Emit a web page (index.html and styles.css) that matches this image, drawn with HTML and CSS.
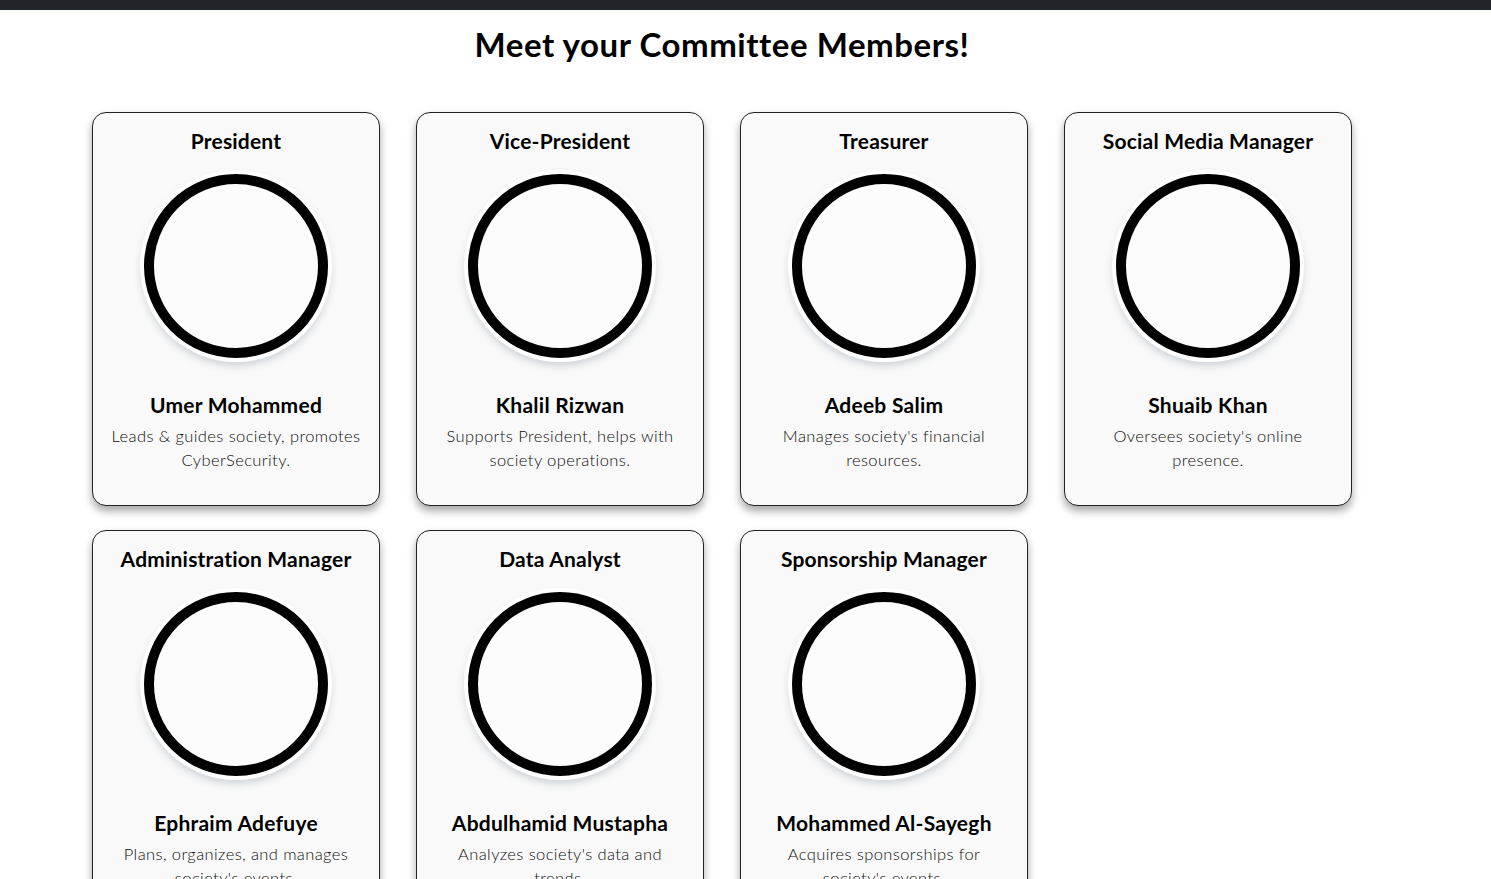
FILE: index.html
```html
<!DOCTYPE html>
<html lang="en">
<head>
<meta charset="utf-8">
<title>Committee</title>
<link rel="stylesheet" href="styles.css">
</head>
<body>
<div class="topbar"></div>
<main class="page">
  <h1 class="title">Meet your Committee Members!</h1>
  <section class="grid">
    <article class="card">
      <h3 class="role">President</h3>
      <div class="avatar"></div>
      <h4 class="name">Umer Mohammed</h4>
      <p class="desc">Leads &amp; guides society, promotes CyberSecurity.</p>
    </article>
    <article class="card">
      <h3 class="role">Vice-President</h3>
      <div class="avatar"></div>
      <h4 class="name">Khalil Rizwan</h4>
      <p class="desc">Supports President, helps with society operations.</p>
    </article>
    <article class="card">
      <h3 class="role">Treasurer</h3>
      <div class="avatar"></div>
      <h4 class="name">Adeeb Salim</h4>
      <p class="desc">Manages society's financial resources.</p>
    </article>
    <article class="card">
      <h3 class="role">Social Media Manager</h3>
      <div class="avatar"></div>
      <h4 class="name">Shuaib Khan</h4>
      <p class="desc">Oversees society's online presence.</p>
    </article>
    <article class="card">
      <h3 class="role">Administration Manager</h3>
      <div class="avatar"></div>
      <h4 class="name">Ephraim Adefuye</h4>
      <p class="desc">Plans, organizes, and manages society's events.</p>
    </article>
    <article class="card">
      <h3 class="role">Data Analyst</h3>
      <div class="avatar"></div>
      <h4 class="name">Abdulhamid Mustapha</h4>
      <p class="desc">Analyzes society's data and trends.</p>
    </article>
    <article class="card">
      <h3 class="role">Sponsorship Manager</h3>
      <div class="avatar"></div>
      <h4 class="name">Mohammed Al-Sayegh</h4>
      <p class="desc">Acquires sponsorships for society's events.</p>
    </article>
  </section>
</main>
</body>
</html>
```
FILE: styles.css
```css
* { box-sizing: border-box; }
html, body { margin: 0; padding: 0; background: #fff; }
body {
  font-family: "Lato", "Open Sans", sans-serif;
  color: #000;
}
.topbar {
  height: 10px;
  background: #212529;
}
.page {
  width: 1444px;
  display: flex;
  flex-direction: column;
  align-items: center;
}
.title {
  margin: 17px 0 0;
  font-size: 33px;
  line-height: 34px;
  font-weight: 700;
  letter-spacing: 0.55px;
  color: #000;
}
.grid {
  margin-top: 51px;
  display: grid;
  grid-template-columns: repeat(4, 288px);
  column-gap: 36px;
  row-gap: 24px;
}
.card {
  background: #f9f9f9;
  border: 1px solid #222;
  border-radius: 14px;
  box-shadow: 0 5px 8px rgba(0, 0, 0, 0.35);
  padding: 16px 16px 33px;
  display: flex;
  flex-direction: column;
  align-items: center;
  text-align: center;
}
.role {
  margin: 0;
  font-size: 21px;
  line-height: 24px;
  font-weight: 700;
  letter-spacing: 0.2px;
}
.avatar {
  margin-top: 21px;
  width: 184px;
  height: 184px;
  border-radius: 50%;
  border: 10px solid #000;
  background: #fcfcfc;
  box-shadow: 0 0 0 4px #fff, 0 5px 8px 2px rgba(60, 80, 100, 0.25);
}
.name {
  margin: 35px 0 0;
  font-size: 21px;
  line-height: 24px;
  font-weight: 700;
  letter-spacing: 0.25px;
}
.desc {
  margin: 7px 0 0;
  font-size: 16.5px;
  line-height: 24px;
  font-weight: 300;
  letter-spacing: 0.4px;
  color: #0d0d0d;
}
```
